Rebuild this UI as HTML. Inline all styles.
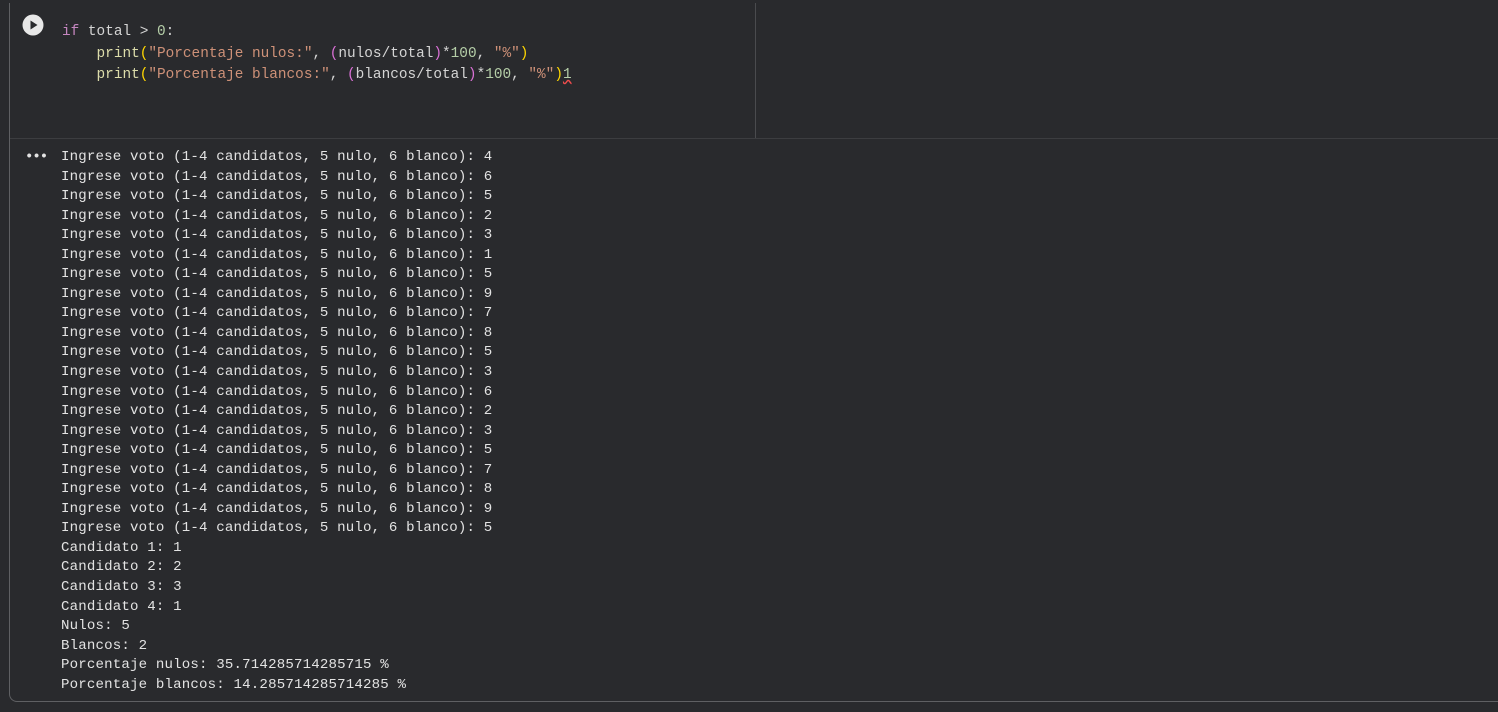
<!DOCTYPE html>
<html><head><style>
body{margin:0;width:1498px;height:712px;background:#292a2d;overflow:hidden;position:relative;font-family:"Liberation Mono",monospace;}
.cell{position:absolute;left:9px;top:3px;width:1500px;height:698px;border-left:1px solid #5f6063;border-bottom:1px solid #5f6063;border-bottom-left-radius:8px;}
.vline{position:absolute;left:755px;top:3px;width:1px;height:135px;background:#4a4b4e;}
.hline{position:absolute;left:10px;top:138px;width:1488px;height:1px;background:#3c3d40;}
.code{position:absolute;left:62px;top:22px;font-size:14.4px;line-height:21.5px;color:#d4d4d4;white-space:pre;}
.kw{color:#c586c0}.fn{color:#dcdcaa}.st{color:#ce9178}.nm{color:#b5cea8}.p1{color:#ffd700}.p2{color:#da70d6}
.out{position:absolute;left:61px;top:148px;font-size:14.1px;line-height:19.55px;letter-spacing:0.17px;color:#e3e3e3;white-space:pre;}
.dots{position:absolute;left:25px;top:149px;color:#e3e3e3;font-size:14px;letter-spacing:-1px;font-weight:bold;}
</style></head><body>
<div class="cell"></div>
<div class="vline"></div>
<div class="hline"></div>
<svg style="position:absolute;left:22px;top:14px" width="22" height="22" viewBox="0 0 22 22"><circle cx="11" cy="11" r="10.5" fill="#e8e8e8"/><path d="M8.5 6.5 L15.5 11 L8.5 15.5Z" fill="#292a2d"/></svg>
<div class="code"><span class="kw">if</span> total &gt; <span class="nm">0</span>:
    <span class="fn">print</span><span class="p1">(</span><span class="st">"Porcentaje nulos:"</span>, <span class="p2">(</span>nulos/total<span class="p2">)</span>*<span class="nm">100</span>, <span class="st">"%"</span><span class="p1">)</span>
    <span class="fn">print</span><span class="p1">(</span><span class="st">"Porcentaje blancos:"</span>, <span class="p2">(</span>blancos/total<span class="p2">)</span>*<span class="nm">100</span>, <span class="st">"%"</span><span class="p1">)</span><span class="nm" style="text-decoration:underline wavy #f14c4c">1</span></div>
<div class="dots">•••</div>
<div class="out">Ingrese voto (1-4 candidatos, 5 nulo, 6 blanco): 4
Ingrese voto (1-4 candidatos, 5 nulo, 6 blanco): 6
Ingrese voto (1-4 candidatos, 5 nulo, 6 blanco): 5
Ingrese voto (1-4 candidatos, 5 nulo, 6 blanco): 2
Ingrese voto (1-4 candidatos, 5 nulo, 6 blanco): 3
Ingrese voto (1-4 candidatos, 5 nulo, 6 blanco): 1
Ingrese voto (1-4 candidatos, 5 nulo, 6 blanco): 5
Ingrese voto (1-4 candidatos, 5 nulo, 6 blanco): 9
Ingrese voto (1-4 candidatos, 5 nulo, 6 blanco): 7
Ingrese voto (1-4 candidatos, 5 nulo, 6 blanco): 8
Ingrese voto (1-4 candidatos, 5 nulo, 6 blanco): 5
Ingrese voto (1-4 candidatos, 5 nulo, 6 blanco): 3
Ingrese voto (1-4 candidatos, 5 nulo, 6 blanco): 6
Ingrese voto (1-4 candidatos, 5 nulo, 6 blanco): 2
Ingrese voto (1-4 candidatos, 5 nulo, 6 blanco): 3
Ingrese voto (1-4 candidatos, 5 nulo, 6 blanco): 5
Ingrese voto (1-4 candidatos, 5 nulo, 6 blanco): 7
Ingrese voto (1-4 candidatos, 5 nulo, 6 blanco): 8
Ingrese voto (1-4 candidatos, 5 nulo, 6 blanco): 9
Ingrese voto (1-4 candidatos, 5 nulo, 6 blanco): 5
Candidato 1: 1
Candidato 2: 2
Candidato 3: 3
Candidato 4: 1
Nulos: 5
Blancos: 2
Porcentaje nulos: 35.714285714285715 %
Porcentaje blancos: 14.285714285714285 %</div>
</body></html>
